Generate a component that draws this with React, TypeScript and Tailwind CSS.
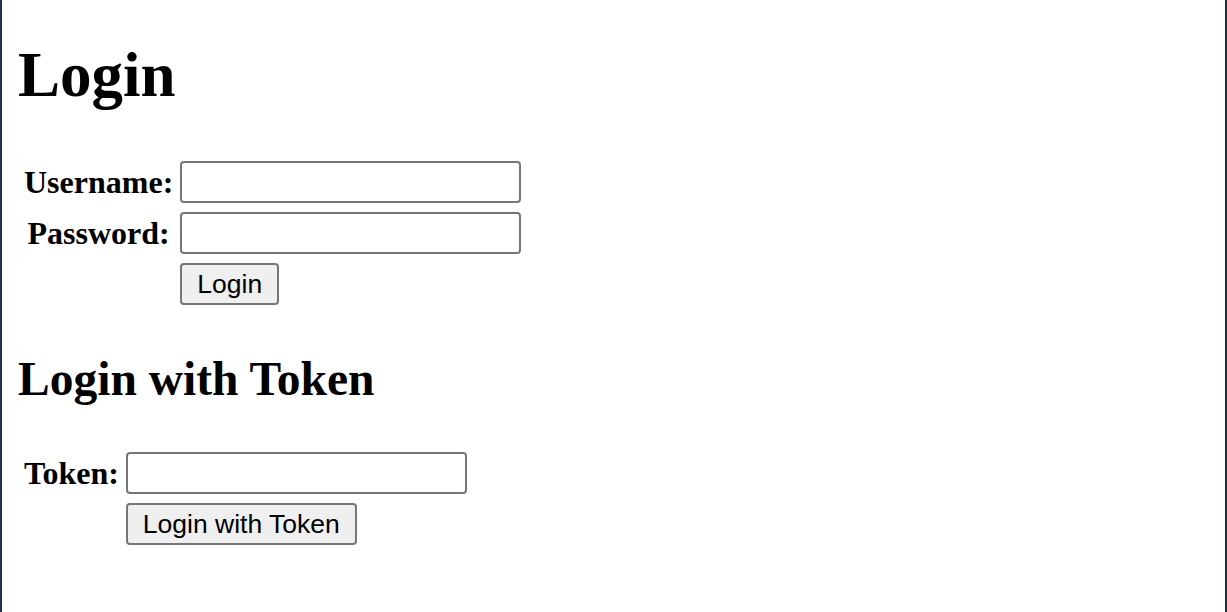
import React from "react";

const serif = "font-['Liberation_Serif','Times_New_Roman',serif]";
const sans = "font-['Liberation_Sans',Arial,sans-serif]";

function Field({ label, type = "text" }: { label: string; type?: string }) {
  return (
    <>
      <label className={`${serif} text-center text-[32px] font-bold leading-[36px] text-black`}>
        {label}
      </label>
      <input
        type={type}
        className="h-[42px] w-[341px] rounded-[4px] border-2 border-[#767676] bg-white px-[4px] outline-none"
      />
    </>
  );
}

function SubmitButton({ children }: { children: React.ReactNode }) {
  return (
    <>
      <span />
      <button
        className={`${sans} h-[42px] justify-self-start rounded-[4px] border-2 border-[#767676] bg-[#efefef] px-[15px] text-[26.5px] leading-none text-black`}
      >
        {children}
      </button>
    </>
  );
}

export default function App() {
  return (
    <div className="min-h-[612px] w-full border-x-2 border-[#1f3447] bg-white pl-[16px]">
      <h1 className={`${serif} pt-[39px] text-[63px] font-bold leading-[72px] text-black`}>Login</h1>

      <form className="ml-[6px] mt-[50px] grid grid-cols-[auto_auto] items-center justify-start gap-x-[7px] gap-y-[9px]">
        <Field label="Username:" />
        <Field label="Password:" type="password" />
        <SubmitButton>Login</SubmitButton>
      </form>

      <h2 className={`${serif} mt-[47px] text-[47.5px] font-bold leading-[54px] text-black`}>
        Login with Token
      </h2>

      <form className="ml-[6px] mt-[46px] grid grid-cols-[auto_auto] items-center justify-start gap-x-[7px] gap-y-[9px]">
        <Field label="Token:" />
        <SubmitButton>Login with Token</SubmitButton>
      </form>
    </div>
  );
}
